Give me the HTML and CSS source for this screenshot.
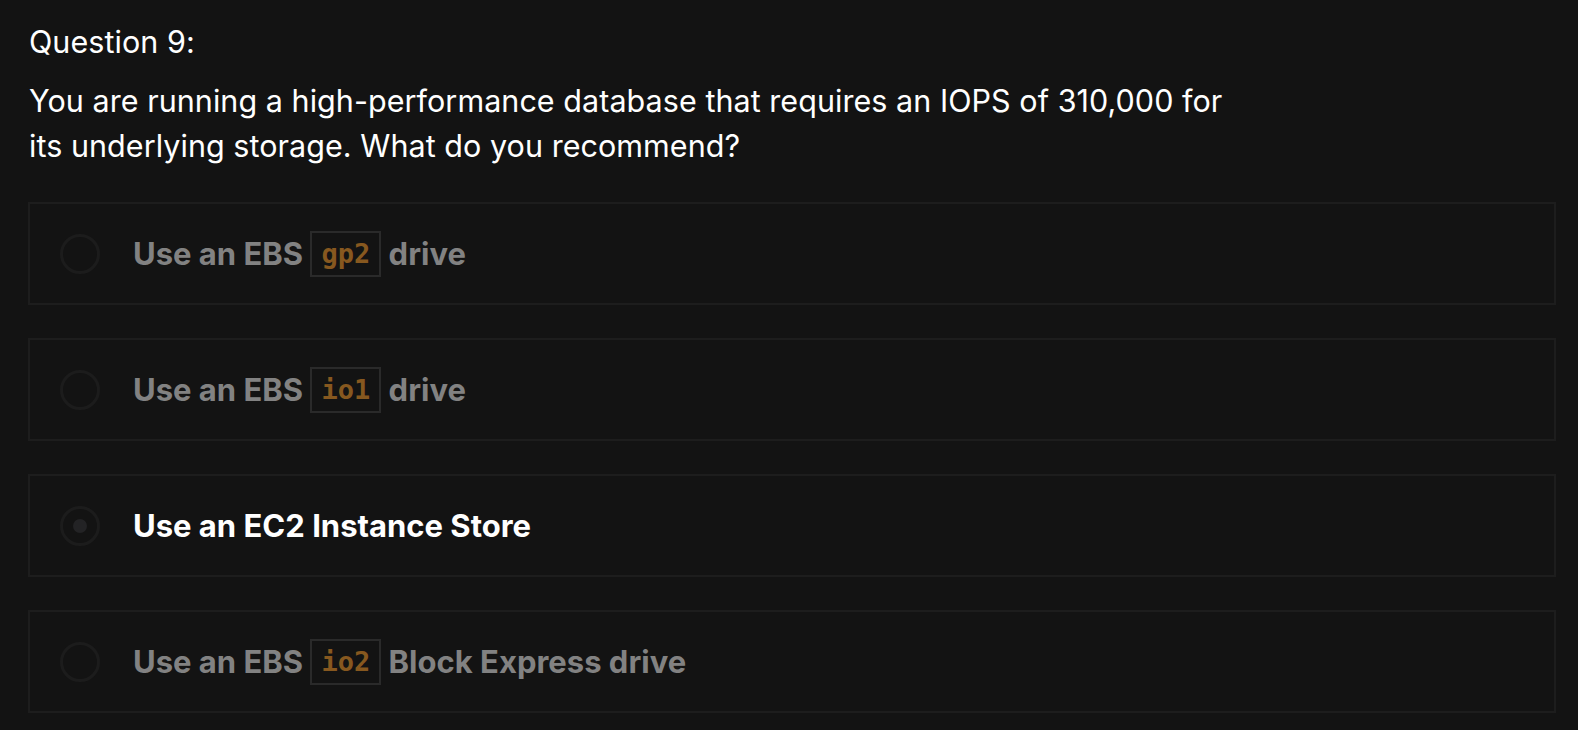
FILE: index.html
```html
<!DOCTYPE html>
<html lang="en">
<head>
<meta charset="utf-8">
<title>Question 9</title>
<link rel="stylesheet" href="styles.css">
</head>
<body>
<main class="quiz">
  <h2 class="q-title">Question 9:</h2>
  <p class="q-text">You are running a high-performance database that requires an IOPS of 310,000 for<br>its underlying storage. What do you recommend?</p>
  <ul class="options">
    <li class="option">
      <span class="radio"></span>
      <span class="label">Use an EBS <code class="code">gp2</code> drive</span>
    </li>
    <li class="option">
      <span class="radio"></span>
      <span class="label">Use an EBS <code class="code">io1</code> drive</span>
    </li>
    <li class="option selected">
      <span class="radio"><span class="dot"></span></span>
      <span class="label">Use an EC2 Instance Store</span>
    </li>
    <li class="option">
      <span class="radio"></span>
      <span class="label">Use an EBS <code class="code">io2</code> Block Express drive</span>
    </li>
  </ul>
</main>
</body>
</html>
```

FILE: styles.css
```css
html, body {
  margin: 0;
  padding: 0;
  background: #131313;
}
body {
  font-family: Inter, "Noto Sans", "Liberation Sans", sans-serif;
  color: #ffffff;
}
.quiz {
  padding: 22px 22px 0 28px;
}
.q-title {
  margin: 0 0 0 1px;
  font-size: 30.5px;
  font-weight: 400;
  line-height: 40px;
  letter-spacing: 0.05px;
}
.q-text {
  margin: 16px 0 0 1px;
  font-size: 30.5px;
  font-weight: 400;
  line-height: 45px;
  letter-spacing: 0.05px;
}
.options {
  list-style: none;
  margin: 34px 0 0 0;
  padding: 0;
  display: flex;
  flex-direction: column;
  gap: 33px;
}
.option {
  box-sizing: border-box;
  height: 103px;
  border: 2px solid #1d1d1d;
  display: flex;
  align-items: center;
  padding-left: 30px;
  gap: 33px;
}
.radio {
  box-sizing: border-box;
  width: 40px;
  height: 40px;
  border-radius: 50%;
  border: 3px solid #1c1c1c;
  display: flex;
  align-items: center;
  justify-content: center;
  flex: none;
}
.dot {
  width: 14px;
  height: 14px;
  border-radius: 50%;
  background: #232325;
}
.label {
  font-size: 31px;
  font-weight: 700;
  color: #828282;
  letter-spacing: 0;
  line-height: 46px;
  display: flex;
  align-items: center;
  white-space: pre;
}
.selected .label {
  color: #ffffff;
}
.code {
  box-sizing: border-box;
  display: inline-block;
  height: 46px;
  line-height: 42px;
  padding: 0 9px;
  border: 2px solid #2a2a2a;
  font-family: "DejaVu Sans Mono", "Liberation Mono", monospace;
  font-size: 27px;
  font-weight: 700;
  color: #87581f;
  letter-spacing: 0;
  margin: 0;
}
```
